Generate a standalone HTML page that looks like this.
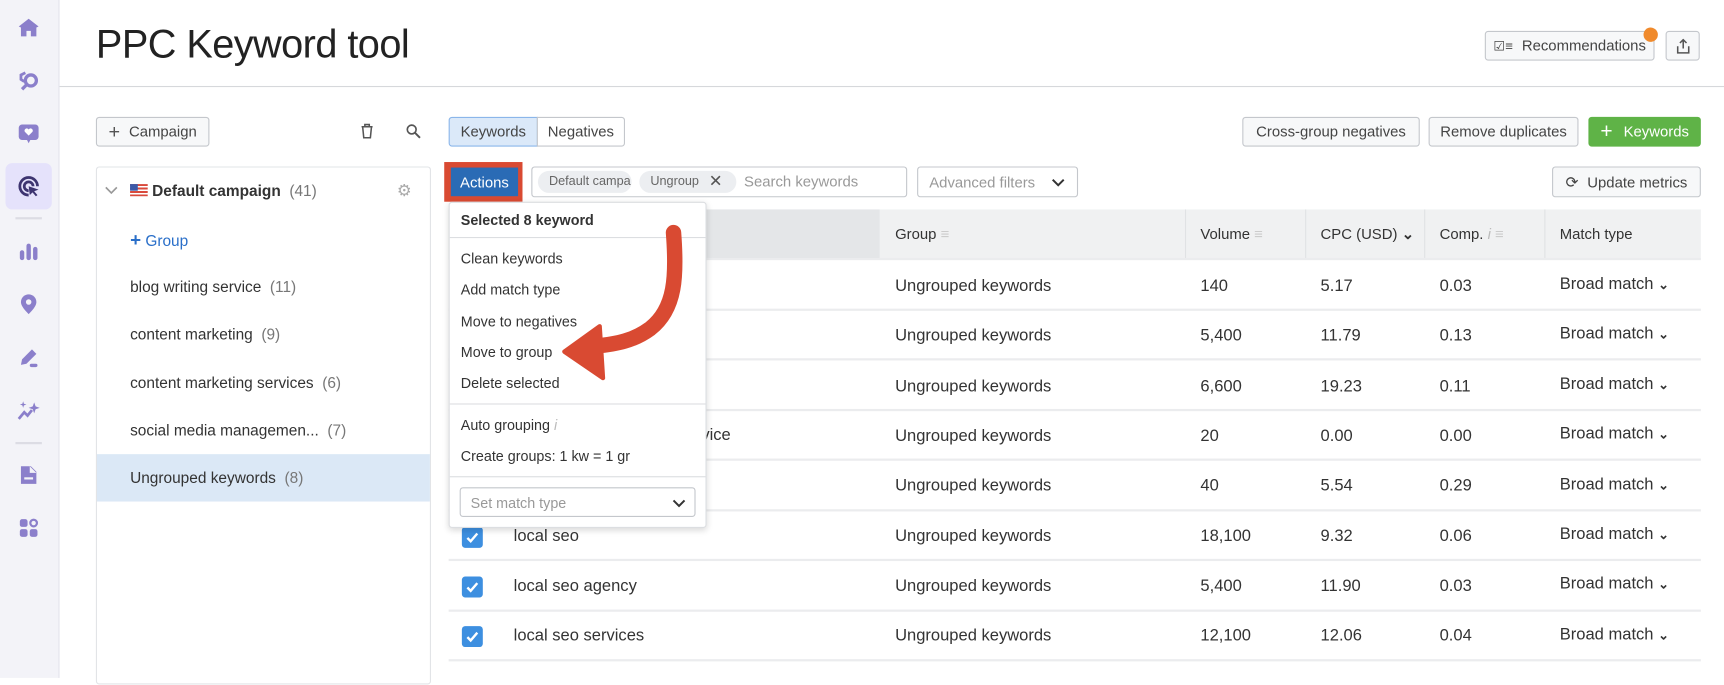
<!DOCTYPE html>
<html><head><meta charset="utf-8"><style>
*{box-sizing:border-box;margin:0;padding:0}
html,body{width:1724px;height:678px;overflow:hidden;background:#fff}
#w{position:absolute;left:0;top:0;width:1564px;height:615px;transform:scale(1.10230);transform-origin:0 0;font-family:"Liberation Sans",sans-serif;color:#333}
.a{position:absolute}
.btn{position:absolute;border:1px solid #c4c7cc;border-radius:3px;background:#f7f8f9;font-size:13.5px;color:#444;display:flex;align-items:center;justify-content:center;white-space:nowrap}
.side{left:0;top:0;width:54px;height:615px;background:#f3f3f8;border-right:1px solid #e3e3ec}
.ic{position:absolute;left:15px;width:22px;height:22px}
.t{position:absolute;font-size:14px;white-space:nowrap;color:#333}
.cnt{color:#777}
.row{position:absolute;left:407px;width:1136px;height:2px;background:#ebecee}
.cell{position:absolute;font-size:15px;color:#333;white-space:nowrap}
.mi{position:absolute;left:10px;font-size:13px;color:#333;white-space:nowrap}
.chk{position:absolute;left:419px;width:19px;height:19px;background:#3d8fe0;border-radius:3px}
</style></head><body><div id="w">
<div class="a side"></div>
<div class="a" style="left:5px;top:148px;width:42px;height:42px;background:#e5e2fb;border-radius:6px"></div>
<div class="a" style="left:14px;top:197px;width:24px;height:2px;background:#dcdce4"></div>
<div class="a" style="left:14px;top:401px;width:24px;height:2px;background:#dcdce4"></div>
<svg class="ic" style="top:14px" viewBox="0 0 22 22"><path d="M11 3 L20 10 L18 11 L18 19 L13 19 L13 14 L9 14 L9 19 L4 19 L4 11 L2 10Z" fill="#8b7fcb"/></svg>
<svg class="ic" style="top:62px" viewBox="0 0 22 22"><circle cx="13" cy="11" r="5" fill="none" stroke="#8b7fcb" stroke-width="3"/><path d="M9 15 L5 19" stroke="#8b7fcb" stroke-width="3"/><path d="M8 4 L4 6 L4 10 L7 12" fill="none" stroke="#8b7fcb" stroke-width="2.5"/></svg>
<svg class="ic" style="top:110px" viewBox="0 0 22 22"><rect x="2" y="3" width="18" height="14" rx="3" fill="#8b7fcb"/><path d="M9 16 L11 20 L13 16Z" fill="#8b7fcb"/><path d="M11 13 L7.5 9.5 A2 2 0 0 1 11 7.5 A2 2 0 0 1 14.5 9.5Z" fill="#fff"/></svg>
<svg class="ic" style="top:158px" viewBox="0 0 22 22"><path d="M11 19 A8 8 0 1 1 19 11" fill="none" stroke="#3d3470" stroke-width="2.5"/><path d="M11 15 A4 4 0 1 1 15 11" fill="none" stroke="#3d3470" stroke-width="2.5"/><path d="M11 11 L20 14 L16 15.5 L19 19 L17.5 20 L14.5 16.5 L12 19Z" fill="#3d3470"/></svg>
<svg class="ic" style="top:217px" viewBox="0 0 22 22"><rect x="3" y="10" width="4" height="9" rx="2" fill="#8b7fcb"/><rect x="9" y="4" width="4" height="15" rx="2" fill="#8b7fcb"/><rect x="15" y="7" width="4" height="12" rx="2" fill="#8b7fcb"/></svg>
<svg class="ic" style="top:265px" viewBox="0 0 22 22"><path d="M11 20 C5 14 4 11 4 9 A7 7 0 0 1 18 9 C18 11 17 14 11 20Z" fill="#8b7fcb"/><circle cx="11" cy="9" r="2.5" fill="#f3f3f8"/></svg>
<svg class="ic" style="top:313px" viewBox="0 0 22 22"><path d="M4 18 L5 13 L14 4 L18 8 L9 17Z" fill="#8b7fcb"/><rect x="12" y="17" width="7" height="3" rx="1.5" fill="#8b7fcb"/></svg>
<svg class="ic" style="top:361px" viewBox="0 0 22 22"><path d="M2 19 L7 13 L10 16 L14 11" fill="none" stroke="#8b7fcb" stroke-width="2.5"/><path d="M16 4 L17.3 7.7 L21 9 L17.3 10.3 L16 14 L14.7 10.3 L11 9 L14.7 7.7Z" fill="#8b7fcb"/><path d="M6 3 L6.7 5.3 L9 6 L6.7 6.7 L6 9 L5.3 6.7 L3 6 L5.3 5.3Z" fill="#8b7fcb"/></svg>
<svg class="ic" style="top:420px" viewBox="0 0 22 22"><path d="M4 3 L13 3 L18 8 L18 19 L4 19Z" fill="#8b7fcb"/><path d="M12 3 L12 9 L18 9" fill="#f3f3f8"/><rect x="7" y="13" width="8" height="2" fill="#f3f3f8"/></svg>
<svg class="ic" style="top:468px" viewBox="0 0 22 22"><rect x="3" y="3" width="7" height="7" rx="2" fill="#8b7fcb"/><circle cx="15.5" cy="6.5" r="3" fill="none" stroke="#8b7fcb" stroke-width="2"/><rect x="3" y="12" width="7" height="7" rx="2" fill="#8b7fcb"/><rect x="12" y="12" width="7" height="7" rx="2" fill="#8b7fcb"/></svg>

<div class="a" style="left:87px;top:19px;font-size:36px;color:#222;letter-spacing:-0.5px">PPC Keyword tool</div>
<div class="a" style="left:54px;top:78px;width:1510px;height:1px;background:#d6d8db"></div>
<div class="btn" style="left:1347px;top:28px;width:154px;height:27px"><span style="font-size:12px;margin-right:8px">☑≡</span>Recommendations</div>
<div class="a" style="left:1491px;top:25px;width:13px;height:13px;border-radius:50%;background:#f08a2c"></div>
<div class="btn" style="left:1511px;top:28px;width:31px;height:27px"><svg width="14" height="14" viewBox="0 0 14 14"><path d="M7 1 L7 9 M4 4 L7 1 L10 4 M2 7 L2 13 L12 13 L12 7" fill="none" stroke="#555" stroke-width="1.4"/></svg></div>

<div class="btn" style="left:87px;top:106px;width:103px;height:27px"><span style="font-size:18px;margin-right:8px;color:#555">+</span>Campaign</div>
<svg class="a" style="left:326px;top:112px" width="14" height="14" viewBox="0 0 14 14"><path d="M2 3 L12 3 M5 3 L5 1 L9 1 L9 3 M3 3 L4 13 L10 13 L11 3" fill="none" stroke="#555" stroke-width="1.4"/></svg>
<svg class="a" style="left:368px;top:112px" width="14" height="14" viewBox="0 0 14 14"><circle cx="5.5" cy="5.5" r="4" fill="none" stroke="#555" stroke-width="1.5"/><path d="M8.5 8.5 L13 13" stroke="#555" stroke-width="1.8"/></svg>
<div class="btn" style="left:407px;top:106px;width:81px;height:27px;background:#dbe9f9;border-color:#8bb6ea;border-radius:3px 0 0 3px">Keywords</div>
<div class="btn" style="left:487px;top:106px;width:80px;height:27px;background:#fff;border-radius:0 3px 3px 0">Negatives</div>
<div class="btn" style="left:1127px;top:106px;width:161px;height:27px">Cross-group negatives</div>
<div class="btn" style="left:1296px;top:106px;width:136px;height:27px">Remove duplicates</div>
<div class="btn" style="left:1441px;top:106px;width:102px;height:27px;background:#5fb347;border-color:#5fb347;color:#fff"><span style="font-size:19px;margin-right:10px">+</span>Keywords</div>

<div class="a" style="left:87px;top:151px;width:304px;height:470px;border:1px solid #e2e4e7;border-radius:3px"></div>
<svg class="a" style="left:95px;top:168px" width="12" height="10" viewBox="0 0 12 10"><path d="M1 2 L6 7 L11 2" fill="none" stroke="#999" stroke-width="1.5"/></svg>
<div class="a" style="left:118px;top:167px;width:16px;height:11px;background:repeating-linear-gradient(#d94a3c 0 1.6px,#fff 1.6px 3.2px)"><div style="width:7px;height:6px;background:#3c5aa8"></div></div>
<div class="t" style="left:138px;top:165px;font-weight:bold;font-size:14px">Default campaign <span class="cnt" style="font-weight:normal">&nbsp;(41)</span></div>
<div class="t" style="left:360px;top:164px;color:#aaa;font-size:15px">⚙</div>
<div class="t" style="left:118px;top:208px;color:#2a6fc9"><b style="font-size:17px">+</b> Group</div>
<div class="t" style="left:118px;top:252px">blog writing service <span class="cnt">&nbsp;(11)</span></div>
<div class="t" style="left:118px;top:295px">content marketing <span class="cnt">&nbsp;(9)</span></div>
<div class="t" style="left:118px;top:339px">content marketing services <span class="cnt">&nbsp;(6)</span></div>
<div class="t" style="left:118px;top:382px">social media managemen... <span class="cnt">&nbsp;(7)</span></div>
<div class="a" style="left:88px;top:412px;width:302px;height:43px;background:#dbe8f6"></div>
<div class="t" style="left:118px;top:425px">Ungrouped keywords <span class="cnt">&nbsp;(8)</span></div>

<div class="a" style="left:403px;top:147px;width:71px;height:36px;background:#d94a32"></div>
<div class="a" style="left:409px;top:152px;width:61px;height:26px;background:#2a6bb5;color:#fff;font-size:13.5px;display:flex;align-items:center;justify-content:center">Actions</div>
<div class="a" style="left:482px;top:151px;width:341px;height:28px;border:1px solid #c4c7cc;border-radius:3px;background:#fff"></div>
<div class="a" style="left:488px;top:155px;width:85px;height:20px;border-radius:10px;background:#eceef1;font-size:11.5px;color:#666;padding:4px 0 0 10px;overflow:hidden;white-space:nowrap">Default campa</div>
<div class="a" style="left:580px;top:155px;width:88px;height:20px;border-radius:10px;background:#eceef1;font-size:11.5px;color:#666;padding:4px 0 0 10px;white-space:nowrap">Ungroup<span style="font-size:15px;color:#555;position:absolute;left:63px;top:0">✕</span></div>
<div class="a" style="left:675px;top:157px;font-size:13.5px;color:#999">Search keywords</div>
<div class="a" style="left:832px;top:151px;width:146px;height:28px;border:1px solid #c4c7cc;border-radius:3px;font-size:13.5px;color:#999;padding:6px 0 0 10px">Advanced filters<svg class="a" style="left:121px;top:10px" width="12" height="8" viewBox="0 0 12 8"><path d="M1 1 L6 6 L11 1" fill="none" stroke="#333" stroke-width="1.8"/></svg></div>
<div class="btn" style="left:1408px;top:151px;width:135px;height:28px"><span style="margin-right:8px;font-size:14px">⟳</span>Update metrics</div>

<div class="a" style="left:407px;top:190px;width:1136px;height:45px;background:#f0f1f2"></div>
<div class="a" style="left:407px;top:190px;width:391px;height:45px;background:#e4e6e8"></div>
<div class="a" style="left:1075px;top:190px;width:1px;height:45px;background:#e0e2e4"></div>
<div class="a" style="left:1184px;top:190px;width:1px;height:45px;background:#e0e2e4"></div>
<div class="a" style="left:1292px;top:190px;width:1px;height:45px;background:#e0e2e4"></div>
<div class="a" style="left:1401px;top:190px;width:1px;height:45px;background:#e0e2e4"></div>
<div class="t" style="left:812px;top:205px;font-size:13.5px">Group <span style="color:#ccc">≡</span></div>
<div class="t" style="left:1089px;top:205px;font-size:13.5px">Volume <span style="color:#ccc">≡</span></div>
<div class="t" style="left:1198px;top:205px;font-size:13.5px">CPC (USD) <b>⌄</b></div>
<div class="t" style="left:1306px;top:205px;font-size:13.5px">Comp. <i style="color:#bbb">i</i> <span style="color:#ccc">≡</span></div>
<div class="t" style="left:1415px;top:205px;font-size:13.5px">Match type</div>

<div class="row" style="top:234px"></div><div class="row" style="top:280px"></div><div class="row" style="top:325px"></div><div class="row" style="top:371px"></div><div class="row" style="top:416px"></div><div class="row" style="top:462px"></div><div class="row" style="top:507px"></div><div class="row" style="top:553px"></div><div class="row" style="top:598px"></div>

<div class="cell" style="left:466px;top:341px">content creation services</div>
<div class="cell" style="left:462px;top:386px">content writing agency service</div>
<div class="cell" style="left:466px;top:478px">local seo</div>
<div class="cell" style="left:466px;top:523px">local seo agency</div>
<div class="cell" style="left:466px;top:568px">local seo services</div>
<div class="chk" style="top:478px"><svg width="19" height="19" viewBox="0 0 19 19"><path d="M5 10 L8 13 L14 6" fill="none" stroke="#fff" stroke-width="2.2"/></svg></div>
<div class="chk" style="top:523px"><svg width="19" height="19" viewBox="0 0 19 19"><path d="M5 10 L8 13 L14 6" fill="none" stroke="#fff" stroke-width="2.2"/></svg></div>
<div class="chk" style="top:568px"><svg width="19" height="19" viewBox="0 0 19 19"><path d="M5 10 L8 13 L14 6" fill="none" stroke="#fff" stroke-width="2.2"/></svg></div>

<div class="cell" style="left:812px;top:251px">Ungrouped keywords</div><div class="cell" style="left:1089px;top:251px">140</div><div class="cell" style="left:1198px;top:251px">5.17</div><div class="cell" style="left:1306px;top:251px">0.03</div><div class="cell" style="left:1415px;top:249px">Broad match <b style="font-size:12px">⌄</b></div>
<div class="cell" style="left:812px;top:296px">Ungrouped keywords</div><div class="cell" style="left:1089px;top:296px">5,400</div><div class="cell" style="left:1198px;top:296px">11.79</div><div class="cell" style="left:1306px;top:296px">0.13</div><div class="cell" style="left:1415px;top:294px">Broad match <b style="font-size:12px">⌄</b></div>
<div class="cell" style="left:812px;top:342px">Ungrouped keywords</div><div class="cell" style="left:1089px;top:342px">6,600</div><div class="cell" style="left:1198px;top:342px">19.23</div><div class="cell" style="left:1306px;top:342px">0.11</div><div class="cell" style="left:1415px;top:340px">Broad match <b style="font-size:12px">⌄</b></div>
<div class="cell" style="left:812px;top:387px">Ungrouped keywords</div><div class="cell" style="left:1089px;top:387px">20</div><div class="cell" style="left:1198px;top:387px">0.00</div><div class="cell" style="left:1306px;top:387px">0.00</div><div class="cell" style="left:1415px;top:385px">Broad match <b style="font-size:12px">⌄</b></div>
<div class="cell" style="left:812px;top:432px">Ungrouped keywords</div><div class="cell" style="left:1089px;top:432px">40</div><div class="cell" style="left:1198px;top:432px">5.54</div><div class="cell" style="left:1306px;top:432px">0.29</div><div class="cell" style="left:1415px;top:431px">Broad match <b style="font-size:12px">⌄</b></div>
<div class="cell" style="left:812px;top:478px">Ungrouped keywords</div><div class="cell" style="left:1089px;top:478px">18,100</div><div class="cell" style="left:1198px;top:478px">9.32</div><div class="cell" style="left:1306px;top:478px">0.06</div><div class="cell" style="left:1415px;top:476px">Broad match <b style="font-size:12px">⌄</b></div>
<div class="cell" style="left:812px;top:523px">Ungrouped keywords</div><div class="cell" style="left:1089px;top:523px">5,400</div><div class="cell" style="left:1198px;top:523px">11.90</div><div class="cell" style="left:1306px;top:523px">0.03</div><div class="cell" style="left:1415px;top:521px">Broad match <b style="font-size:12px">⌄</b></div>
<div class="cell" style="left:812px;top:568px">Ungrouped keywords</div><div class="cell" style="left:1089px;top:568px">12,100</div><div class="cell" style="left:1198px;top:568px">12.06</div><div class="cell" style="left:1306px;top:568px">0.04</div><div class="cell" style="left:1415px;top:567px">Broad match <b style="font-size:12px">⌄</b></div>

<div class="a" style="left:407px;top:183px;width:234px;height:296px;background:#fff;border:1px solid #dcdee1;border-radius:3px;box-shadow:0 2px 6px rgba(0,0,0,.15)">
<div class="mi" style="top:8px;font-weight:bold">Selected 8 keyword</div>
<div class="a" style="left:0;top:31px;width:232px;height:1px;background:#dcdee1"></div>
<div class="mi" style="top:43px">Clean keywords</div>
<div class="mi" style="top:71px">Add match type</div>
<div class="mi" style="top:100px">Move to negatives</div>
<div class="mi" style="top:128px">Move to group</div>
<div class="mi" style="top:156px">Delete selected</div>
<div class="a" style="left:0;top:182px;width:232px;height:1px;background:#dcdee1"></div>
<div class="mi" style="top:194px">Auto grouping <i style="color:#bbb">i</i></div>
<div class="mi" style="top:222px">Create groups: 1 kw = 1 gr</div>
<div class="a" style="left:0;top:248px;width:232px;height:1px;background:#dcdee1"></div>
<div class="a" style="left:9px;top:258px;width:214px;height:27px;border:1px solid #c4c7cc;border-radius:3px;font-size:13px;color:#999;padding:6px 0 0 9px">Set match type<svg class="a" style="left:192px;top:10px" width="12" height="8" viewBox="0 0 12 8"><path d="M1 1 L6 6 L11 1" fill="none" stroke="#333" stroke-width="1.8"/></svg></div>
</div>
<svg class="a" style="left:0;top:0" width="1564" height="615"><path d="M611 211 C614 250 613 280 590 298 C575 309 560 312 540 314" fill="none" stroke="#d94a32" stroke-width="14" stroke-linecap="round"/><path d="M512 319 L544 296 L547 343Z" fill="#d94a32" stroke="#d94a32" stroke-width="4" stroke-linejoin="round"/></svg>
</div></body></html>
